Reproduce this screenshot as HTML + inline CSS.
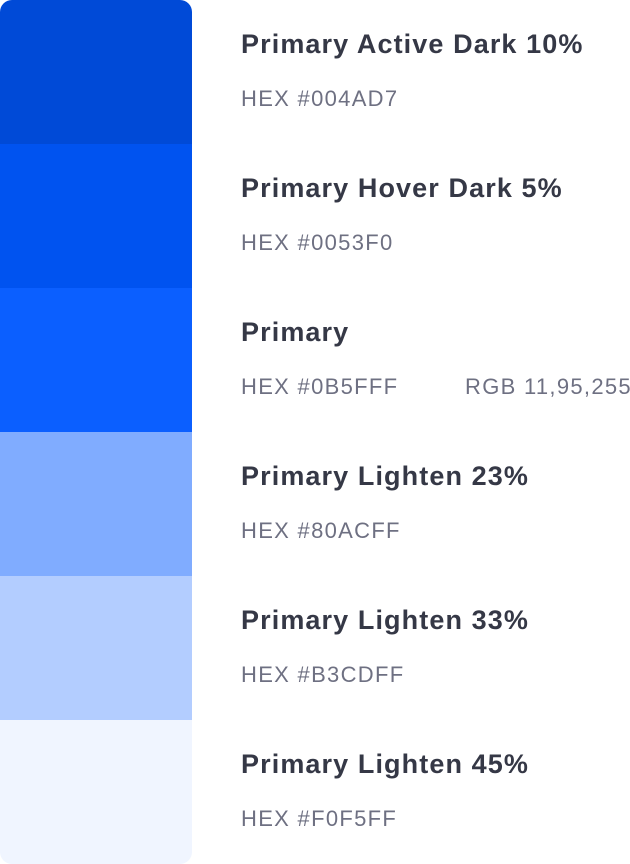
<!DOCTYPE html>
<html><head><meta charset="utf-8"><style>
body{margin:0;width:630px;height:864px;background:#fff;font-family:"Liberation Sans",sans-serif;position:relative;overflow:hidden}
.sw{position:absolute;left:0;width:192px;height:144px}
.t{position:absolute;left:241px;font-size:27px;font-weight:bold;color:#353846;white-space:nowrap;letter-spacing:1.1px}
.h{position:absolute;left:241px;font-size:22px;color:#6e7082;white-space:nowrap;letter-spacing:1.3px}
</style></head><body>
<div class="sw" style="top:0;background:#004AD7;border-radius:12px 12px 0 0"></div>
<div class="sw" style="top:144px;background:#0053F0"></div>
<div class="sw" style="top:288px;background:#0B5FFF"></div>
<div class="sw" style="top:432px;background:#80ACFF"></div>
<div class="sw" style="top:576px;background:#B3CDFF"></div>
<div class="sw" style="top:720px;background:#F0F5FF;border-radius:0 0 12px 12px"></div>

<div class="t" style="top:29px">Primary Active Dark 10%</div>
<div class="h" style="top:86px">HEX #004AD7</div>
<div class="t" style="top:173px">Primary Hover Dark 5%</div>
<div class="h" style="top:230px">HEX #0053F0</div>
<div class="t" style="top:317px">Primary</div>
<div class="h" style="top:374px">HEX #0B5FFF</div>
<div class="h" style="top:374px;left:465px">RGB 11,95,255</div>
<div class="t" style="top:461px">Primary Lighten 23%</div>
<div class="h" style="top:518px">HEX #80ACFF</div>
<div class="t" style="top:605px">Primary Lighten 33%</div>
<div class="h" style="top:662px">HEX #B3CDFF</div>
<div class="t" style="top:749px">Primary Lighten 45%</div>
<div class="h" style="top:806px">HEX #F0F5FF</div>
</body></html>
